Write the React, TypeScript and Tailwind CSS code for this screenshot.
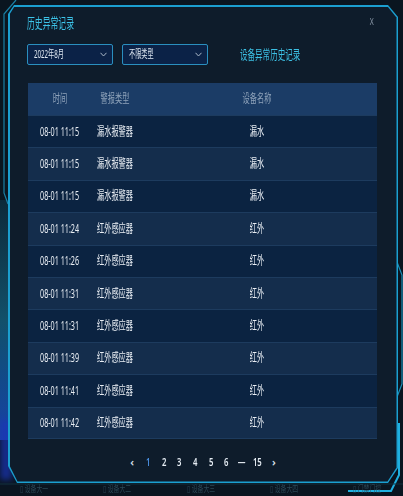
import React from "react";

type Row = { time: string; type: string; name: string };

const rows: Row[] = [
  { time: "08-01 11:15", type: "漏水报警器", name: "漏水" },
  { time: "08-01 11:15", type: "漏水报警器", name: "漏水" },
  { time: "08-01 11:15", type: "漏水报警器", name: "漏水" },
  { time: "08-01 11:24", type: "红外感应器", name: "红外" },
  { time: "08-01 11:26", type: "红外感应器", name: "红外" },
  { time: "08-01 11:31", type: "红外感应器", name: "红外" },
  { time: "08-01 11:31", type: "红外感应器", name: "红外" },
  { time: "08-01 11:39", type: "红外感应器", name: "红外" },
  { time: "08-01 11:41", type: "红外感应器", name: "红外" },
  { time: "08-01 11:42", type: "红外感应器", name: "红外" },
];

const pages = ["1", "2", "3", "4", "5", "6", "—", "15"];

function Chevron() {
  return (
    <svg width="7" height="5" viewBox="0 0 7 5" className="shrink-0">
      <polyline points="0.5,0.8 3.5,4 6.5,0.8" fill="none" stroke="#aab8c8" strokeWidth="1" />
    </svg>
  );
}

function Select({ label }: { label: string }) {
  return (
    <div className="flex h-[21px] w-[86px] items-center justify-between rounded-[2px] border border-[#2a8fbf] bg-[#0b2247] pl-[6px] pr-[5px]">
      <span className="inline-block origin-left scale-x-[0.56] whitespace-nowrap text-[11px] text-[#dde6f0]">{label}</span>
      <Chevron />
    </div>
  );
}

function Cell({ children }: { children: React.ReactNode }) {
  return (
    <div className="flex justify-center overflow-visible">
      <span className="inline-block shrink-0 scale-x-[0.6] whitespace-nowrap">{children}</span>
    </div>
  );
}

export default function App() {
  return (
    <div className="relative h-[496px] w-[403px] overflow-hidden bg-[#0a1520] font-['Noto_Sans','Noto_Sans_CJK_SC',sans-serif]">
      {/* background bits peeking out round the dialog */}
      <div className="absolute left-0 top-[200px] h-[240px] w-[10px] bg-gradient-to-b from-[#0c2a3a] via-[#12506a] to-[#1a3fa8]" />
      <div className="absolute left-0 top-[420px] h-[60px] w-[12px] bg-[#1b36b8] opacity-70 blur-[3px]" />
      <svg className="absolute inset-0" width="403" height="496" viewBox="0 0 403 496">
        <path d="M16 0 L4 14 L4 193 L8 204" fill="none" stroke="#1a7fa5" strokeWidth="1.2" />
        <path d="M397 262 L402 275 L402 384 L397 397" fill="none" stroke="#1a8fb8" strokeWidth="1.2" />
        <path d="M399 423 L399 475 L391 491 L348 491" fill="none" stroke="#1fb0e0" strokeWidth="2" />
        <path d="M0 484 L403 484" stroke="#12303c" strokeWidth="1" />
      </svg>
      <div className="absolute left-[20px] top-[482px] flex gap-[40px] text-[9px] text-[#2b4654]">
        {["设备大一", "设备大二", "设备大三", "设备大四", "门禁门控"].map((t) => (
          <span key={t} className="inline-block origin-left scale-x-[0.65] whitespace-nowrap">▯ {t}</span>
        ))}
      </div>

      <div className="relative pl-[8px] pt-[5px]">
        <div className="h-[478px] w-[390px] bg-[#1b9fd0] p-[1.5px] [clip-path:polygon(6px_0,calc(100%-10px)_0,100%_12px,100%_calc(100%-15px),calc(100%-10px)_100%,9px_100%,0_calc(100%-17px),0_9px)]">
          <div className="flex h-full w-full flex-col bg-[#0e1c2b] [clip-path:polygon(5px_0,calc(100%-9px)_0,100%_11px,100%_calc(100%-14px),calc(100%-9px)_100%,8px_100%,0_calc(100%-16px),0_8px)]">
            <div className="mt-[8.5px] flex h-[14px] items-center justify-between pl-[17px] pr-[22px]">
              <span className="inline-block origin-left scale-x-[0.56] whitespace-nowrap text-[14px] text-[#3cc3e8]">历史异常记录</span>
              <span className="inline-block scale-x-[0.75] text-[9px] text-[#8a98a8]">X</span>
            </div>

            <div className="mt-[15px] flex h-[21px] items-center gap-[9px] pl-[17.5px]">
              <Select label="2022年8月" />
              <Select label="不限类型" />
              <span className="ml-[23px] inline-block origin-left scale-x-[0.58] whitespace-nowrap text-[13px] text-[#3cc0e4]">设备异常历史记录</span>
            </div>

            <div className="ml-[18.5px] mt-[18px] w-[349px]">
              <div className="grid h-[32px] grid-cols-[64px_46px_1fr] items-center bg-[#1b3c66] text-[12px] text-[#8fa3ba]">
                <Cell>时间</Cell>
                <Cell>警报类型</Cell>
                <Cell>设备名称</Cell>
              </div>
              {rows.map((r, i) => (
                <div
                  key={i}
                  className={`grid h-[32.4px] grid-cols-[64px_46px_1fr] items-center border-t-[1.5px] border-[#1d3b5e] text-[12px] text-[#e8edf3] ${
                    i % 2 === 1 ? "bg-[#142d4c]" : "bg-[#0b2341]"
                  } ${i === rows.length - 1 ? "border-b-[1.5px]" : ""}`}
                >
                  <Cell>{r.time}</Cell>
                  <Cell>{r.type}</Cell>
                  <Cell>{r.name}</Cell>
                </div>
              ))}
            </div>

            <div className="mt-[16px] flex h-[14px] items-center justify-center text-[11px] font-semibold text-[#e6edf4]">
              <span className="w-[17px] text-center text-[#d8e0ea]">‹</span>
              {pages.map((p, i) => (
                <span key={i} className={`w-[15.6px] text-center ${i === 0 ? "text-[#4a8fe0]" : ""}`}>
                  <span className="inline-block scale-x-[0.7]">{p}</span>
                </span>
              ))}
              <span className="w-[17px] text-center text-[#d8e0ea]">›</span>
            </div>
          </div>
        </div>
      </div>
    </div>
  );
}
